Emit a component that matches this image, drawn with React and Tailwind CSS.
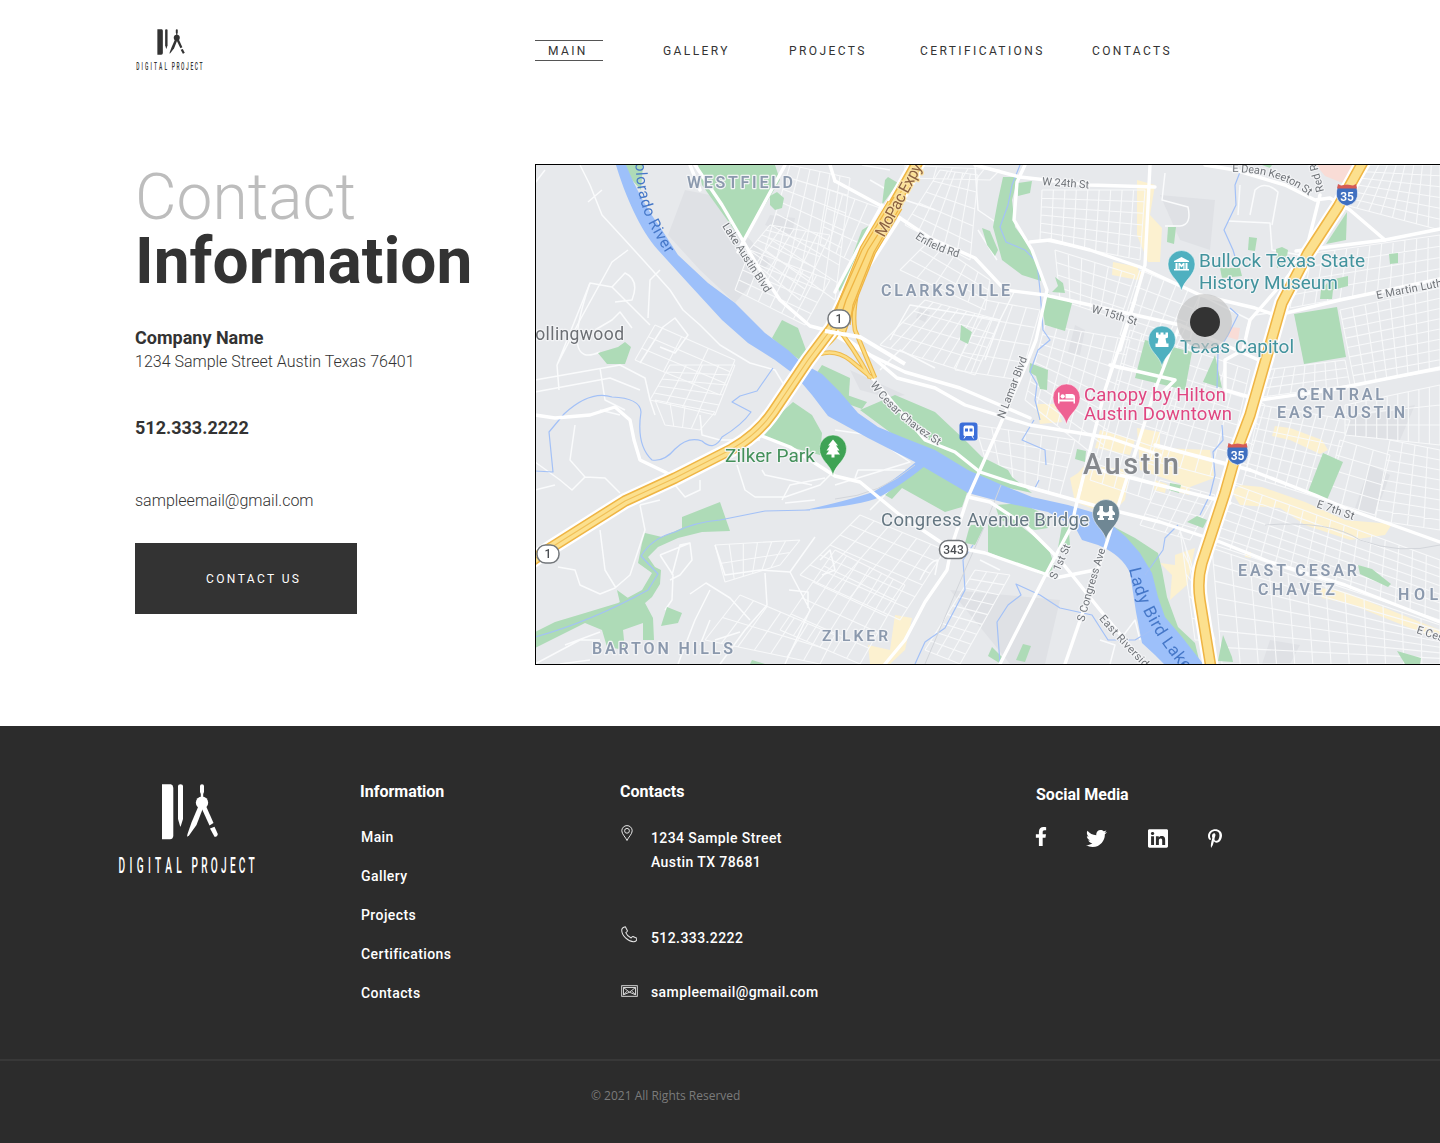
import React from 'react';
import { FaFacebookF, FaTwitter, FaLinkedin, FaPinterestP } from 'react-icons/fa';

/* ---------- Logo ---------- */
function Logo({ className }) {
  return (
    <svg viewBox="0 0 138 90" preserveAspectRatio="none" className={className} fill="currentColor">
      <path d="M44 0.3H53Q55.3 1 55.3 4V51.5Q55.3 55 52 55.3H44Z" />
      <path d="M60 2Q60 0.3 62.5 0.3T65 2V35L62.7 42.5H62.2L60 35Z" />
      <path d="M82 2Q82 0.3 84 0.3T86 2V8L85.2 10V13H82.8V10L82 8Z" />
      <circle cx="84" cy="18.7" r="6.2" />
      <path d="M80.5 22L85 24L78.5 41L71 51.5L69 52.8L69.5 50L73.5 38.5Z" />
      <path d="M83.5 24L88 22L95.5 39L91.5 41.5Z" />
      <path d="M92 44.5L96.5 42.8L99.8 50Q99.5 53 96.5 52.8Z" />
      <g fontFamily="Roboto, sans-serif" fontWeight="500" fontSize="22.5">
        <text transform="translate(0.5 88.7) scale(.45 1)" textLength="141">DIGITAL</text>
        <text transform="translate(73.5 88.7) scale(.45 1)" textLength="141">PROJECT</text>
      </g>
    </svg>
  );
}

/* ---------- Map ---------- */
const parks = [
  '698,165 775,165 780,180 743,242 702,185', '770,196 777,192 784,198 782,208 775,210 770,205',
  '598,353 618,347 625,342 631,347 625,364 607,364', '782,320 798,328 806,350 800,360 788,352 772,338',
  '822,365 850,378 848,408 830,402 812,380', '625,165 643,165 641,190 632,180',
  '885,180 888,177 898,183 882,205', '870,225 856,262 840,292 838,288 850,262 862,230',
  '1003,177 1018,177 1012,200 1015,227 1032,250 1040,267 1041,281 1022,275 1002,260 993,227 998,200',
  '1018,183 1032,181 1030,193 1018,196', '982,228 990,231 998,250 995,256 987,245',
  '1047,293 1072,303 1065,331 1045,325 1043,312', '1055,277 1063,283 1065,293 1052,292 1058,286',
  '961,325 972,332 968,344 960,340', '1030,363 1048,370 1047,390 1040,389 1036,376 1029,372',
  '847,395 867,402 862,409 848,404',
  '860,410 895,395 935,412 968,443 982,457 1008,470 1012,477 1032,493 1000,486 968,472 935,452 895,436',
  '885,495 902,480 922,465 968,490 962,507 945,512 902,488 892,499',
  '995,505 1022,503 1045,515 1048,528 1035,530 1000,520', '988,523 1022,527 1048,547 1055,567 1045,576 988,552',
  '985,525 975,545 965,543 970,525', '1068,520 1070,545 1058,548 1062,525',
  '1105,522 1135,538 1158,553 1162,570 1167,597 1178,627 1195,643 1200,664 1180,645 1160,617 1150,595 1146,572 1135,553 1122,538',
  '1077,449 1086,451 1085,462 1075,459', '1145,340 1192,352 1185,390 1135,378', '1215,355 1222,388 1203,382',
  '1168,227 1176,227 1174,244 1167,242', '1249,237 1257,238 1255,251 1248,250', '1276,249 1282,247 1288,250 1286,262 1277,268',
  '1220,268 1240,268 1242,276 1222,278', '1347,212 1346,240 1326,244',
  '1330,280 1348,276 1348,286 1333,290 1332,299 1320,299 1321,290', '1389,254 1398,253 1398,263 1390,264',
  '1294,314 1337,307 1346,357 1304,364', '1323,453 1343,462 1327,500 1308,492', '1170,483 1181,485 1179,493 1169,490',
  '1187,522 1197,516 1207,520 1203,528', '1358,565 1372,569 1391,584 1388,587 1360,574', '1223,635 1232,657 1233,662 1218,661',
  '1397,651 1421,658 1420,664 1405,664', '1023,644 1031,646 1025,662 1016,660', '992,647 1002,657 1001,664 988,656',
  '793,402 812,415 822,433 820,455 790,447 762,435 782,412',
  '682,517 720,502 730,531 702,532 678,538 658,547 648,557 655,567 661,570 660,584 652,597 645,603 653,618 654,640 643,640 643,623 623,630 625,650 607,647 602,630 585,623 535,648 535,632 555,622 585,613 618,603 642,590 652,573 638,563 642,543 645,533 662,537 682,528',
  '617,590 628,598 620,603', '667,607 682,613 678,623 661,626', '752,660 765,664 750,664', '1262,165 1272,165 1270,168',
];

const shades = [
  '685,190 710,195 770,262 735,303 700,270 668,235', '770,215 795,218 792,235 765,225',
  '950,590 1060,600 1045,664 1010,664', '920,308 930,312 925,322 916,318', '1075,325 1085,330 1080,355 1068,352',
  '1350,418 1415,405 1400,440 1345,435', '1370,465 1390,475 1375,515 1355,508', '1270,640 1300,645 1290,664 1262,664',
  '850,370 905,395 890,398 860,390', '1160,195 1215,200 1210,250 1180,240',
];

const shops = [
  '1137,180 1155,185 1150,215 1162,228 1160,262 1148,262 1137,235', '1113,262 1138,267 1138,280 1112,275', '1135,268 1141,272 1140,280 1135,279',
  '1137,428 1160,432 1160,448 1210,450 1214,478 1190,487 1140,470', '1085,465 1130,470 1125,500 1110,515 1075,502 1070,478 1078,473',
  '1100,430 1135,440 1130,455 1095,448', '1035,404 1055,404 1062,422 1040,424', '1155,480 1167,484 1165,493 1154,490', '1180,484 1190,486 1189,495 1178,492',
  '1275,426 1290,428 1322,440 1328,450 1320,454 1290,440 1272,436',
  '1240,485 1262,487 1305,502 1345,520 1392,524 1385,535 1350,540 1305,525 1280,508 1240,505 1232,492',
  '1175,555 1195,548 1187,585 1170,600 1172,575 1160,563 1175,565', '895,615 912,618 905,650 890,664 870,664 868,645 890,650',
  '1320,588 1345,592 1440,630 1440,640 1350,604 1322,598', '1245,552 1251,552 1251,558 1245,557',
];

const creeks = [
  'M1020 165L1012 185L1008 205L1000 227L1006 242L1025 250L1037 262L1040 290L1043 330L1050 340L1038 350L1030 372L1037 384L1035 400L1040 420',
  'M1240 172L1235 185L1236 205L1224 230L1233 250L1236 260M1230 308L1238 315L1228 335L1218 352L1217 388M1222 425L1223 440L1213 452L1215 475L1210 495L1200 515',
  'M564 414Q590 390 612 397Q640 398 641 412Q636 445 652 460Q664 462 675 449Q688 436 702 441Q714 452 722 437Q742 425 751 412L732 402L740 396L757 391L773 368M564 414L549 432L553 472L535 471',
  'M535 637Q590 622 648 590L658 574L641 556Q652 538 675 532Q695 522 720 520L765 511L810 510',
  'M973 545L963 560L965 590L945 628L925 642L915 664', 'M1000 664L997 622L1008 605L1021 595L1016 584L1040 595L1060 608L1092 615L1108 640L1135 640L1155 628',
  'M1034 420L1022 440L1045 450L1046 465M1039 480L1035 488M1178 525L1165 538L1163 550L1145 575',
];

const mainRoads = [
  'M695 165L722 205L760 270L780 300L810 326L845 335M700 190L690 165M785 165L743 242L738 252',
  'M835 181L885 208L930 238L975 258L1005 290L1045 295L1090 305L1180 325L1270 365',
  'M975 165L1020 177L1090 185L1155 187', 'M1025 165L1017 182L1014 220L1032 250L1047 290L1036 340L1026 365L1000 425L980 470L968 497L952 545L947 570L925 602L905 640L885 664',
  'M1030 242L1050 240L1090 250L1140 267L1200 295L1255 308L1275 315', 'M828 331L860 350L905 372L960 388L1030 418',
  'M845 338L870 355L897 378L935 388L965 405L1030 425L1110 438L1160 455',
  'M870 375L895 405L925 440L955 452L980 472L1010 482L1100 507L1160 522L1220 542L1270 562L1345 585L1440 622',
  'M535 415L555 418L590 415L615 407L630 420L634 440L640 460L665 472L675 478', 'M762 436L790 447L835 476L860 482L900 515L945 545L985 553L1045 574L1055 578L1095 570',
  'M968 497L990 502L1025 525L1060 560L1100 610L1145 664', 'M1080 490L1075 510L1072 525L1045 576L1000 664', 'M1180 325L1155 390L1120 500L1105 548L1065 664',
  'M1135 300L1105 390L1080 490M1110 365L1175 380L1160 395M1250 470L1315 495L1345 508L1440 542', 'M1155 445L1250 470M1100 470L1230 503',
  'M1278 315L1340 300L1440 279M1296 251L1385 240L1440 229', 'M1205 165L1235 170L1285 185L1315 200L1330 198L1350 210L1385 240M1320 195L1305 255L1285 280L1250 320L1243 350L1225 360L1225 400',
  'M1150 165L1145 265L1120 350', 'M1225 390L1260 400L1330 390L1440 368',
  'M830 165L835 181M835 292L860 245L882 205M870 265L900 218',
];

const minorRoads = [
  'M580 165L590 185L602 215L625 240L645 262L670 290L683 310L700 325L720 345L750 363L775 370L790 395M535 183L545 170M588 202L602 190',
  'M628 250L612 262L580 320L557 365L559 390M535 380L620 365L645 378L650 400L655 415M535 392L610 378L640 390M600 368L605 400L625 410M557 365L590 283L612 287L650 325M612 287L625 273Q640 280 632 300L615 302M648 318L650 280L660 270M595 330L612 320L620 312L632 328M640 363L663 327L675 318L688 335L675 353L660 347',
  'M590 283Q560 370 600 352M575 425L570 460L585 477L605 478L620 493M535 462L560 480L572 490L585 477M535 490L555 485M640 505L645 530L630 575L615 588L600 594L580 585L575 570L558 567M600 530L605 570L616 588',
  'M700 480L700 490L685 497L675 485M640 505L660 500M737 465L745 490L755 497L785 497L820 485L835 470M762 470L765 475L812 485M782 500L790 485L825 478M785 503L815 500',
  'M700 415L702 435L720 440L760 440M600 410L620 415M715 545L725 575L760 570L790 572L815 537M690 594L706 583L730 598L750 620M678 664L695 620L710 590M672 575L680 545L690 543L692 560L680 575L670 580M660 555L690 543M660 555L673 575L672 600L665 610',
  'M765 573L767 605L745 630L720 664M790 572L810 610L785 664M715 640L740 632M700 645L710 620M789 590L808 592L808 608M820 560L830 550L835 570L822 575M535 664L580 640L600 640M565 645L600 632M560 664L590 660',
  'M870 180L905 200L935 210M862 165L890 170M975 165L978 210L1000 225M978 230L997 260M880 370L900 350L935 368M985 360L1000 320L1015 290M890 340L910 305L1000 320',
  'M1165 173L1162 200L1188 207Q1192 225 1180 226L1165 226M1250 215L1255 190Q1265 180 1278 192L1272 225M1228 221L1270 223L1272 250L1300 255M1240 185L1238 215M1250 320L1200 295L1190 340L1160 420M1250 350Q1240 330 1255 315L1275 312',
  'M835 485L910 462L870 435L835 430M855 478L858 470L905 470M870 510L905 475L940 505M1000 570L980 560M1120 640L1135 620L1140 640M1100 640L1115 645L1110 664M920 580Q930 560 938 560L935 575',
];

const grids = [
  [790, 165, 850, 178, 835, 300, 765, 250, 6, 7], [750, 250, 830, 280, 805, 325, 735, 290, 6, 4], [770, 225, 830, 235, 800, 300, 745, 255, 5, 6],
  [940, 170, 978, 175, 970, 260, 905, 225, 5, 5], [905, 165, 1000, 170, 990, 180, 905, 178, 6, 1], [830, 190, 880, 208, 852, 262, 820, 245, 4, 3],
  [930, 240, 990, 280, 985, 310, 900, 270, 5, 3], [925, 300, 1000, 320, 975, 375, 880, 345, 9, 4], [985, 300, 1040, 310, 1020, 380, 955, 370, 4, 4],
  [1042, 190, 1145, 190, 1140, 260, 1040, 240, 9, 6], [1055, 250, 1135, 275, 1120, 320, 1060, 300, 6, 4], [1045, 325, 1130, 340, 1100, 460, 1025, 400, 7, 8],
  [1140, 270, 1200, 295, 1175, 350, 1120, 335, 5, 4], [1130, 330, 1190, 350, 1150, 500, 1090, 480, 5, 9], [1190, 350, 1250, 370, 1225, 480, 1150, 460, 5, 8],
  [1160, 480, 1215, 495, 1190, 540, 1140, 525, 4, 4], [1370, 165, 1440, 165, 1440, 230, 1345, 205, 8, 6], [1300, 255, 1440, 235, 1440, 280, 1290, 308, 12, 4],
  [1340, 310, 1440, 288, 1440, 370, 1355, 385, 8, 8], [1265, 370, 1345, 360, 1350, 385, 1255, 398, 8, 3], [1260, 405, 1350, 420, 1325, 500, 1245, 475, 8, 6],
  [1345, 405, 1440, 385, 1440, 445, 1345, 435, 9, 3], [1390, 440, 1440, 450, 1440, 530, 1375, 520, 4, 8], [1340, 440, 1390, 455, 1375, 515, 1325, 500, 3, 4],
  [1235, 485, 1440, 560, 1440, 620, 1215, 545, 15, 7], [1212, 548, 1440, 625, 1440, 664, 1222, 664, 12, 7], [1250, 395, 1225, 480, 1242, 485, 1265, 405, 4, 2],
  [860, 515, 945, 550, 900, 620, 800, 575, 6, 6], [835, 550, 905, 585, 860, 664, 780, 630, 6, 5], [975, 570, 1010, 575, 960, 664, 925, 650, 3, 9],
  [740, 595, 835, 635, 820, 664, 705, 640, 7, 2], [715, 545, 800, 540, 780, 565, 725, 582, 6, 2], [670, 365, 735, 365, 715, 415, 650, 400, 4, 5],
  [655, 325, 735, 360, 720, 395, 635, 360, 3, 3], [655, 400, 715, 412, 700, 430, 665, 425, 4, 1], [975, 425, 1075, 440, 1060, 495, 990, 475, 6, 4], [1180, 530, 1190, 560, 1215, 640, 1195, 640, 2, 5],
];

function gridPath([ax, ay, bx, by, cx, cy, dx, dy, n, m]) {
  const mix = (p, q, t) => (p + (q - p) * t).toFixed(1);
  let d = '';
  for (let i = 0; i <= n; i++) {
    const t = i / n;
    d += `M${mix(ax, bx, t)} ${mix(ay, by, t)}L${mix(dx, cx, t)} ${mix(dy, cy, t)}`;
  }
  for (let j = 0; j <= m; j++) {
    const t = j / m;
    d += `M${mix(ax, dx, t)} ${mix(ay, dy, t)}L${mix(bx, cx, t)} ${mix(by, cy, t)}`;
  }
  return d;
}

const MOPAC = 'M919 160L898 197L868 250L845 300L832 328L808 360L773 412Q758 434 732 449L675 478L625 501L552 547L530 562';
const I35 = 'M1364 160L1338 207L1308 253L1282 303L1250 415L1238 447L1225 493L1202 563Q1197 580 1200 600L1211 668';
const RAMPS = 'M872 245Q850 300 855 330L875 378M835 325Q852 345 870 378M808 360Q830 345 850 360L872 378M820 350Q838 338 840 325M845 297Q838 335 812 352';

const areaLabels = [
  [687, 188, 106, 16, 'WESTFIELD'], [881, 296, 129, 16, 'CLARKSVILLE'], [1297, 400, 87, 16, 'CENTRAL'], [1277, 418, 128, 16, 'EAST AUSTIN'],
  [1238, 576, 119, 16, 'EAST CESAR'], [1258, 595, 77, 16, 'CHAVEZ'], [1398, 600, 66, 16, 'HOLLY'], [822, 641, 66, 15.5, 'ZILKER'], [592, 654, 141, 16, 'BARTON HILLS'],
];
const placeLabels = [
  [1199, 267, 166, 19, '#42939d', 'Bullock Texas State'], [1199, 289, 139, 19, '#42939d', 'History Museum'], [1180, 353, 114, 19, '#42939d', 'Texas Capitol'],
  [1084, 401, 142, 18.5, '#e04681', 'Canopy by Hilton'], [1084, 420, 148, 18.5, '#e04681', 'Austin Downtown'], [725, 462, 90, 19, '#43905a', 'Zilker Park'],
  [881, 526, 208, 18.5, '#657782', 'Congress Avenue Bridge'], [524, 340, 100, 17.5, '#6c6f74', 'Rollingwood'],
];
const streetLabels = [
  ['lake', 'M722 226Q745 262 775 308', 'Lake Austin Blvd', 11, 80], ['enf', 'M915 238Q932 251 964 259', 'Enfield Rd', 11, 48],
  ['w24', 'M1042 185L1095 189', 'W 24th St', 11, 47], ['w15', 'M1091 312L1142 327', 'W 15th St', 11, 47],
  ['lamar', 'M1004 419L1030 351', 'N Lamar Blvd', 11, 65], ['ces', 'M870 385Q895 420 943 448', 'W Cesar Chavez St', 11, 92],
  ['dean', 'M1232 172Q1285 172 1316 202', 'E Dean Keeton St', 11, 82], ['red', 'M1324 191Q1320 175 1310 140', 'Red River', 11, 47],
  ['mlk', 'M1377 299L1480 279', 'E Martin Luther King', 11, 102], ['e7', 'M1316 507L1356 521', 'E 7th St', 11, 39],
  ['ecs', 'M1416 633L1495 658', 'E Cesar Chavez', 11, 76], ['s1', 'M1056 580L1073 541', 'S 1st St', 11, 37],
  ['cong', 'M1084 622Q1093 590 1107 544', 'S Congress Ave', 11, 76], ['riv', 'M1099 619Q1125 650 1175 698', 'East Riverside Dr', 11, 88],
];

function Pin({ x, y, color, children }) {
  return (
    <g transform={`translate(${x} ${y})`}>
      <path d="M0 27C-2 16 -13.5 12 -13.5 0A13.5 13.5 0 0 1 13.5 0C13.5 12 2 16 0 27Z" fill={color} stroke="#fff" strokeOpacity=".6" strokeWidth=".8" />
      <g fill="#fff">{children}</g>
    </g>
  );
}
function Shield({ x, y }) {
  return (
    <g transform={`translate(${x} ${y})`}>
      <path d="M-9 -10L-6 -8.5L0 -10L6 -8.5L9 -10L10.5 -4Q12 8 0 11Q-12 8 -10.5 -4Z" fill="#3f6fc0" stroke="#fff" strokeWidth=".6" />
      <path d="M-9 -11L-6 -9.5L0 -10.5L6 -9.5L9 -11L10 -6.5H-10Z" fill="#d65b55" />
      <text x="0" y="5.500" textAnchor="middle" fontSize="12" fontWeight="600" fill="#fff">35</text>
    </g>
  );
}
function Route({ x, y, w, label }) {
  return (
    <g>
      <rect x={x - w / 2} y={y - 9} width={w} height="18" rx="8.5" fill="#fff" stroke="#73777b" strokeWidth="1.5" />
      <text x={x} y={y + 4.4} textAnchor="middle" fontSize="12" fontWeight="500" fill="#4b4e52">{label}</text>
    </g>
  );
}

function CityMap() {
  return (
    <svg viewBox="536 165 904 499" className="block h-[499px] w-[904px]" fontFamily="Roboto, sans-serif" fill="none">
      <g className="blur-[0.35px]">
        <rect x="530" y="160" width="920" height="510" fill="#e7e9ec" />
        <g fill="#dfe1e5">{shades.map((p) => <polygon key={p} points={p} />)}</g>
        <polygon points="1316,165 1357,165 1345,184 1325,176" fill="#f9dcd6" />
        <polygon points="1230,327 1240,328 1238,340 1228,337" fill="#f9dcd6" />
        <g fill="#fcf1d0">{shops.map((p) => <polygon key={p} points={p} />)}</g>
        <g stroke="#f8f9fa" strokeWidth="1.1">{grids.map((g) => <path key={g.join()} d={gridPath(g)} />)}</g>
        <g stroke="#fafbfc" strokeWidth="1.5" strokeLinejoin="round">{minorRoads.map((p) => <path key={p} d={p} />)}</g>
        <g fill="#aedbb7">{parks.map((p) => <polygon key={p} points={p} />)}</g>
        <g fill="#9dc0fa">
          <path d="M616 165C625 195 640 230 658 250L688 283L722 320L748 343L775 360L795 375L812 395L828 416L868 438L915 462L968 493L1002 502L1048 512L1075 527L1082 540L1098 545Q1122 555 1130 573L1136 612L1142 643L1155 655L1165 665H1204L1182 637L1165 617L1158 597L1152 573L1140 553L1126 537L1112 525L1095 513L1068 505L1032 497L1002 485L968 470L935 450L902 437L878 427L858 413L840 392L822 374L802 363L788 350L765 333L735 303L708 283L678 255L662 230Q640 200 626 165Z" />
          <path d="M917 461L925 466Q895 490 875 499Q850 507 805 510Q850 500 873 492Q895 480 917 461Z" />
        </g>
        <g stroke="#a3c1f7" strokeWidth="1.2" strokeLinejoin="round">{creeks.map((p) => <path key={p} d={p} />)}</g>
        <path d="M835 499Q880 495 915 465M1001 485L985 525L965 570L925 664M1265 525Q1330 520 1360 540Q1400 555 1440 545" stroke="#d3d6db" strokeWidth="1" />
        <g stroke="#fff" strokeWidth="3.4" strokeLinejoin="round" strokeLinecap="round">{mainRoads.map((p) => <path key={p} d={p} />)}</g>
        <g strokeLinejoin="round">
          <path d={RAMPS} stroke="#eeb94b" strokeWidth="4.6" />
          <path d={RAMPS} stroke="#fcdc83" strokeWidth="2.4" />
          {[MOPAC, I35].map((d) => (
            <g key={d}>
              <path d={d} stroke="#fff" strokeWidth="16" />
              <path d={d} stroke="#efb544" strokeWidth="11.5" />
              <path d={d} stroke="#fce08e" strokeWidth="8.4" />
            </g>
          ))}
          <path d={MOPAC} stroke="#f1c058" strokeWidth="1.2" />
          <path d="M895 205L868 250L848 300L838 330" stroke="#efb544" strokeWidth="17" />
          <path d="M895 205L868 250L848 300L838 330" stroke="#fcdc83" strokeWidth="14.5" />
          <path d="M894 197L862 250L840 300M898 203L868 250L846 300L838 325M903 202L874 252L853 305L850 325" stroke="#efb544" strokeWidth="1.3" />
          <path d="M825 331L860 337L905 364" stroke="#fff" strokeWidth="4" />
        </g>

        <defs>
          {streetLabels.map(([id, d]) => <path key={id} id={id} d={d} />)}
          <path id="colorado" d="M636 152Q634 185 644 212Q650 230 674 266" />
          <path id="mopac" d="M884 238L932 149" />
          <path id="lady" d="M1129 569Q1142 630 1200 688" />
        </defs>
        <g stroke="#f3f4f6" strokeWidth="2.4" strokeLinejoin="round">
          <g fill="#707479">
            {streetLabels.map(([id, , t, size, len]) => (
              <text key={id} fontSize={size} className="[paint-order:stroke]"><textPath href={`#${id}`} textLength={len}>{t}</textPath></text>
            ))}
          </g>
          <g fill="#8b99ad" fontWeight="600">
            {areaLabels.map(([x, y, w, size, t]) => <text key={t} x={x} y={y} textLength={w} fontSize={size} className="[paint-order:stroke]">{t}</text>)}
          </g>
          {placeLabels.map(([x, y, w, size, c, t]) => (
            <text key={t} x={x} y={y} textLength={w} fontSize={size} fill={c} className="[paint-order:stroke]">{t}</text>
          ))}
          <text x="1083" y="474" textLength="96" fontSize="29" fontWeight="500" fill="#85888d" className="[paint-order:stroke]">Austin</text>
          <text fontSize="16" fill="#8b6040" stroke="#fbe3a5" className="[paint-order:stroke]"><textPath href="#mopac" textLength="81">MoPac Expy</textPath></text>
        </g>
        <text fontSize="15.5" fill="#4577c8"><textPath href="#colorado" textLength="109">Colorado River</textPath></text>
        <text fontSize="17" fill="#4577c8"><textPath href="#lady" textLength="118">Lady Bird Lake</textPath></text>

        <Route x={839} y={319} w={22} label="1" />
        <Route x={548} y={554} w={22} label="1" />
        <Route x={953.5} y={549.5} w={28} label="343" />
        <Shield x={1347} y={195} />
        <Shield x={1237.5} y={454} />

        <g>
          <rect x="959.5" y="422.5" width="18" height="18" rx="3" fill="#3c6fd9" />
          <path d="M965.5 425.5h6.500q2 0 2 2v7q0 1.500-1.500 1.500h-7.500q-1.500 0-1.500-1.500v-7q0-2 2-2Z" fill="#fff" />
          <path d="M965 428.500h3v3h-3zM969.500 428.500h3v3h-3z" fill="#3c6fd9" />
          <path d="M965.5 436l-1.500 2.500M972 436l1.500 2.500" stroke="#fff" />
        </g>
        <Pin x={1181.5} y={264} color="#4fb0c0">
          <path d="M0 -7L7.500 -3V-2H-7.500V-3ZM-6 -1H-4V5H-6ZM4 -1H6V5H4ZM-7.500 5H7.500V6.500H-7.500ZM-3 5V-1H-1.500L0 1L1.500 -1H3V5H1.800V1.500L0 3.500L-1.800 1.500V5Z" />
        </Pin>
        <Pin x={1162} y={339.5} color="#4fb0c0">
          <path d="M-6 -7H-3.500V-5H-1.500V-7H1.500V-5H3.500V-7H6V-2L3.500 -1L4.500 4H6.500V7.500H-6.500V4H-4.500L-3.500 -1L-6 -2Z" />
        </Pin>
        <Pin x={1066.5} y={397.5} color="#ee6193">
          <path d="M-8.500 -5H-7V2H7V-0.500H8.500V6H7V4H-7V6H-8.500ZM-1 -3.500H6Q8.500 -3 8.500 -0.500V1H-1Z" />
          <circle cx="-3.800" cy="-1.200" r="2.100" />
        </Pin>
        <Pin x={833} y={448.5} color="#3fa355">
          <path d="M0 -9L5 -3H3L6.500 2H4L7 6H1.500V9H-1.500V6H-7L-4 2H-6.500L-3 -3H-5Z" />
        </Pin>
        <Pin x={1106} y={513} color="#6f8794">
          <path d="M-6.500 -7H-3V-2Q0 1 3 -2V-7H6.500V-3L9 0V2H6.500V5H8V7H2V5H3V3H-3V5H-2V7H-8V5H-6.500V2H-9V0L-6.500 -3Z" />
        </Pin>
      </g>

      <circle cx="1204.5" cy="321.5" r="27.5" fill="#c4c4c4" fillOpacity=".68" />
      <circle cx="1205" cy="322" r="15" fill="#333" />
    </svg>
  );
}

/* ---------- Page ---------- */
const footerLinks = ['Main', 'Gallery', 'Projects', 'Certifications', 'Contacts'];

export default function App() {
  return (
    <div className="flex h-[1143px] w-[1440px] flex-col overflow-hidden bg-white font-['Roboto',sans-serif] text-[#333]">
      <header className="flex h-[164px] shrink-0 items-start pl-[136px]">
        <Logo className="mt-[29px] h-[42px] w-[67px]" />
        <nav className="ml-[332px] mt-10 grid grid-cols-[128px_126px_131px_172px_auto] text-[12px] leading-[21px] tracking-[2.4px]">
          <a className="h-[21px] w-[68px] border-y border-[#555] pl-[13px] leading-[20px]">MAIN</a>
          <a className="mt-px">GALLERY</a>
          <a className="mt-px">PROJECTS</a>
          <a className="mt-px">CERTIFICATIONS</a>
          <a className="mt-px">CONTACTS</a>
        </nav>
      </header>

      <main className="flex h-[562px] shrink-0">
        <section className="w-[535px] shrink-0 pl-[135px]">
          <h1 className="mt-0.5 whitespace-nowrap text-[64px] leading-[64px]">
            <span className="block font-light text-[#bdbdbd]">Contact</span>
            <span className="block font-bold">Information</span>
          </h1>
          <h2 className="mt-8 text-[18px] font-bold leading-6">Company Name</h2>
          <p className="text-[16px] font-light leading-6">1234 Sample Street Austin Texas 76401</p>
          <p className="mt-[42px] text-[18px] font-bold leading-6">512.333.2222</p>
          <p className="mt-[49px] text-[16px] font-light leading-6">sampleemail@gmail.com</p>
          <button className="mt-[30px] flex h-[71px] w-[222px] items-center bg-[#333] pl-[71px] text-[12px] tracking-[2.4px] text-white">
            CONTACT US
          </button>
        </section>
        <div className="h-[501px] w-[905px] shrink-0 overflow-hidden border-y border-l border-black">
          <CityMap />
        </div>
      </main>

      <footer className="h-[417px] shrink-0 bg-[#2c2c2c] text-white">
        <div className="flex h-[335px] items-start border-b-2 border-[#383838] text-[14px] font-medium tracking-[.41px]">
          <Logo className="ml-[118px] mt-[58px] h-[90px] w-[138px]" />
          <div className="ml-[104px] mt-[54px] w-[260px]">
            <h3 className="text-[16px] font-bold leading-6 tracking-normal">Information</h3>
            <ul className="ml-px mt-[13.5px]">
              {footerLinks.map((l) => <li key={l} className="h-[39px] leading-[39px]">{l}</li>)}
            </ul>
          </div>
          <div className="mt-[54px] w-[416px]">
            <h3 className="text-[16px] font-bold leading-6 tracking-normal">Contacts</h3>
            <div className="mt-[22px] flex">
              <svg viewBox="0 0 12 16" className="-mt-px ml-[.5px] h-4 w-3" fill="none" stroke="#e5e5e5">
                <path d="M6 15.500C4.800 12.500 .8 9 .8 5.800A5.200 5.200 0 0 1 11.200 5.800C11.200 9 7.200 12.500 6 15.500Z" />
                <circle cx="6" cy="5.800" r="2.400" />
              </svg>
              <p className="ml-[18.5px] leading-6">1234 Sample Street<br />Austin TX 78681</p>
            </div>
            <div className="mt-[52px] flex h-6 items-start">
              <svg viewBox="0 0 16 16" className="ml-[.5px] size-[16.5px]" fill="none" stroke="#e5e5e5" strokeLinejoin="round">
                <path d="M4.200 .7L6.200 4.600Q6.400 5.400 4.600 6.400Q5.800 9.600 9.800 11.600Q10.800 9.900 11.600 10.100L15.400 12Q15.600 14.600 12.600 15.300Q8.500 15.500 4.400 11.600Q.6 8 .7 3.600Q1 1.600 4.200 .7Z" />
              </svg>
              <p className="ml-[14px] leading-6">512.333.2222</p>
            </div>
            <div className="mt-[30px] flex h-6 items-center">
              <svg viewBox="0 0 17 12" className="-mt-0.5 ml-[.5px] h-3 w-[17px]" fill="none" stroke="#e5e5e5" strokeWidth=".9">
                <rect x=".7" y=".7" width="15.600" height="10.600" />
                <path d="M2.500 2.500L8.500 7.200L14.500 2.500M2.500 9.800L6 6.200M14.500 9.800L11 6.200M2.500 2.500V9.800M14.500 2.500V9.800M2.500 2.500H14.500M2.500 9.800L8.500 7.200L14.500 9.800" />
              </svg>
              <p className="ml-[13.5px] leading-6">sampleemail@gmail.com</p>
            </div>
          </div>
          <div className="mt-[57px]">
            <h3 className="text-[16px] font-bold leading-6 tracking-normal">Social Media</h3>
            <div className="mt-5 flex h-5 items-start">
              <FaFacebookF className="-ml-px h-[19px] w-[12px]" preserveAspectRatio="none" />
              <FaTwitter className="ml-[39px] mt-px size-[21px]" />
              <FaLinkedin className="ml-[41px] mt-[.5px] h-[21px] w-5" preserveAspectRatio="none" />
              <FaPinterestP className="ml-10 mt-0.5 h-[19px] w-[14px]" preserveAspectRatio="none" />
            </div>
          </div>
        </div>
        <p className="ml-[591px] mt-[25px] font-['Open_Sans',sans-serif] text-[12px] leading-5 text-[#7b7b7b]">© 2021 All Rights Reserved</p>
      </footer>
    </div>
  );
}
